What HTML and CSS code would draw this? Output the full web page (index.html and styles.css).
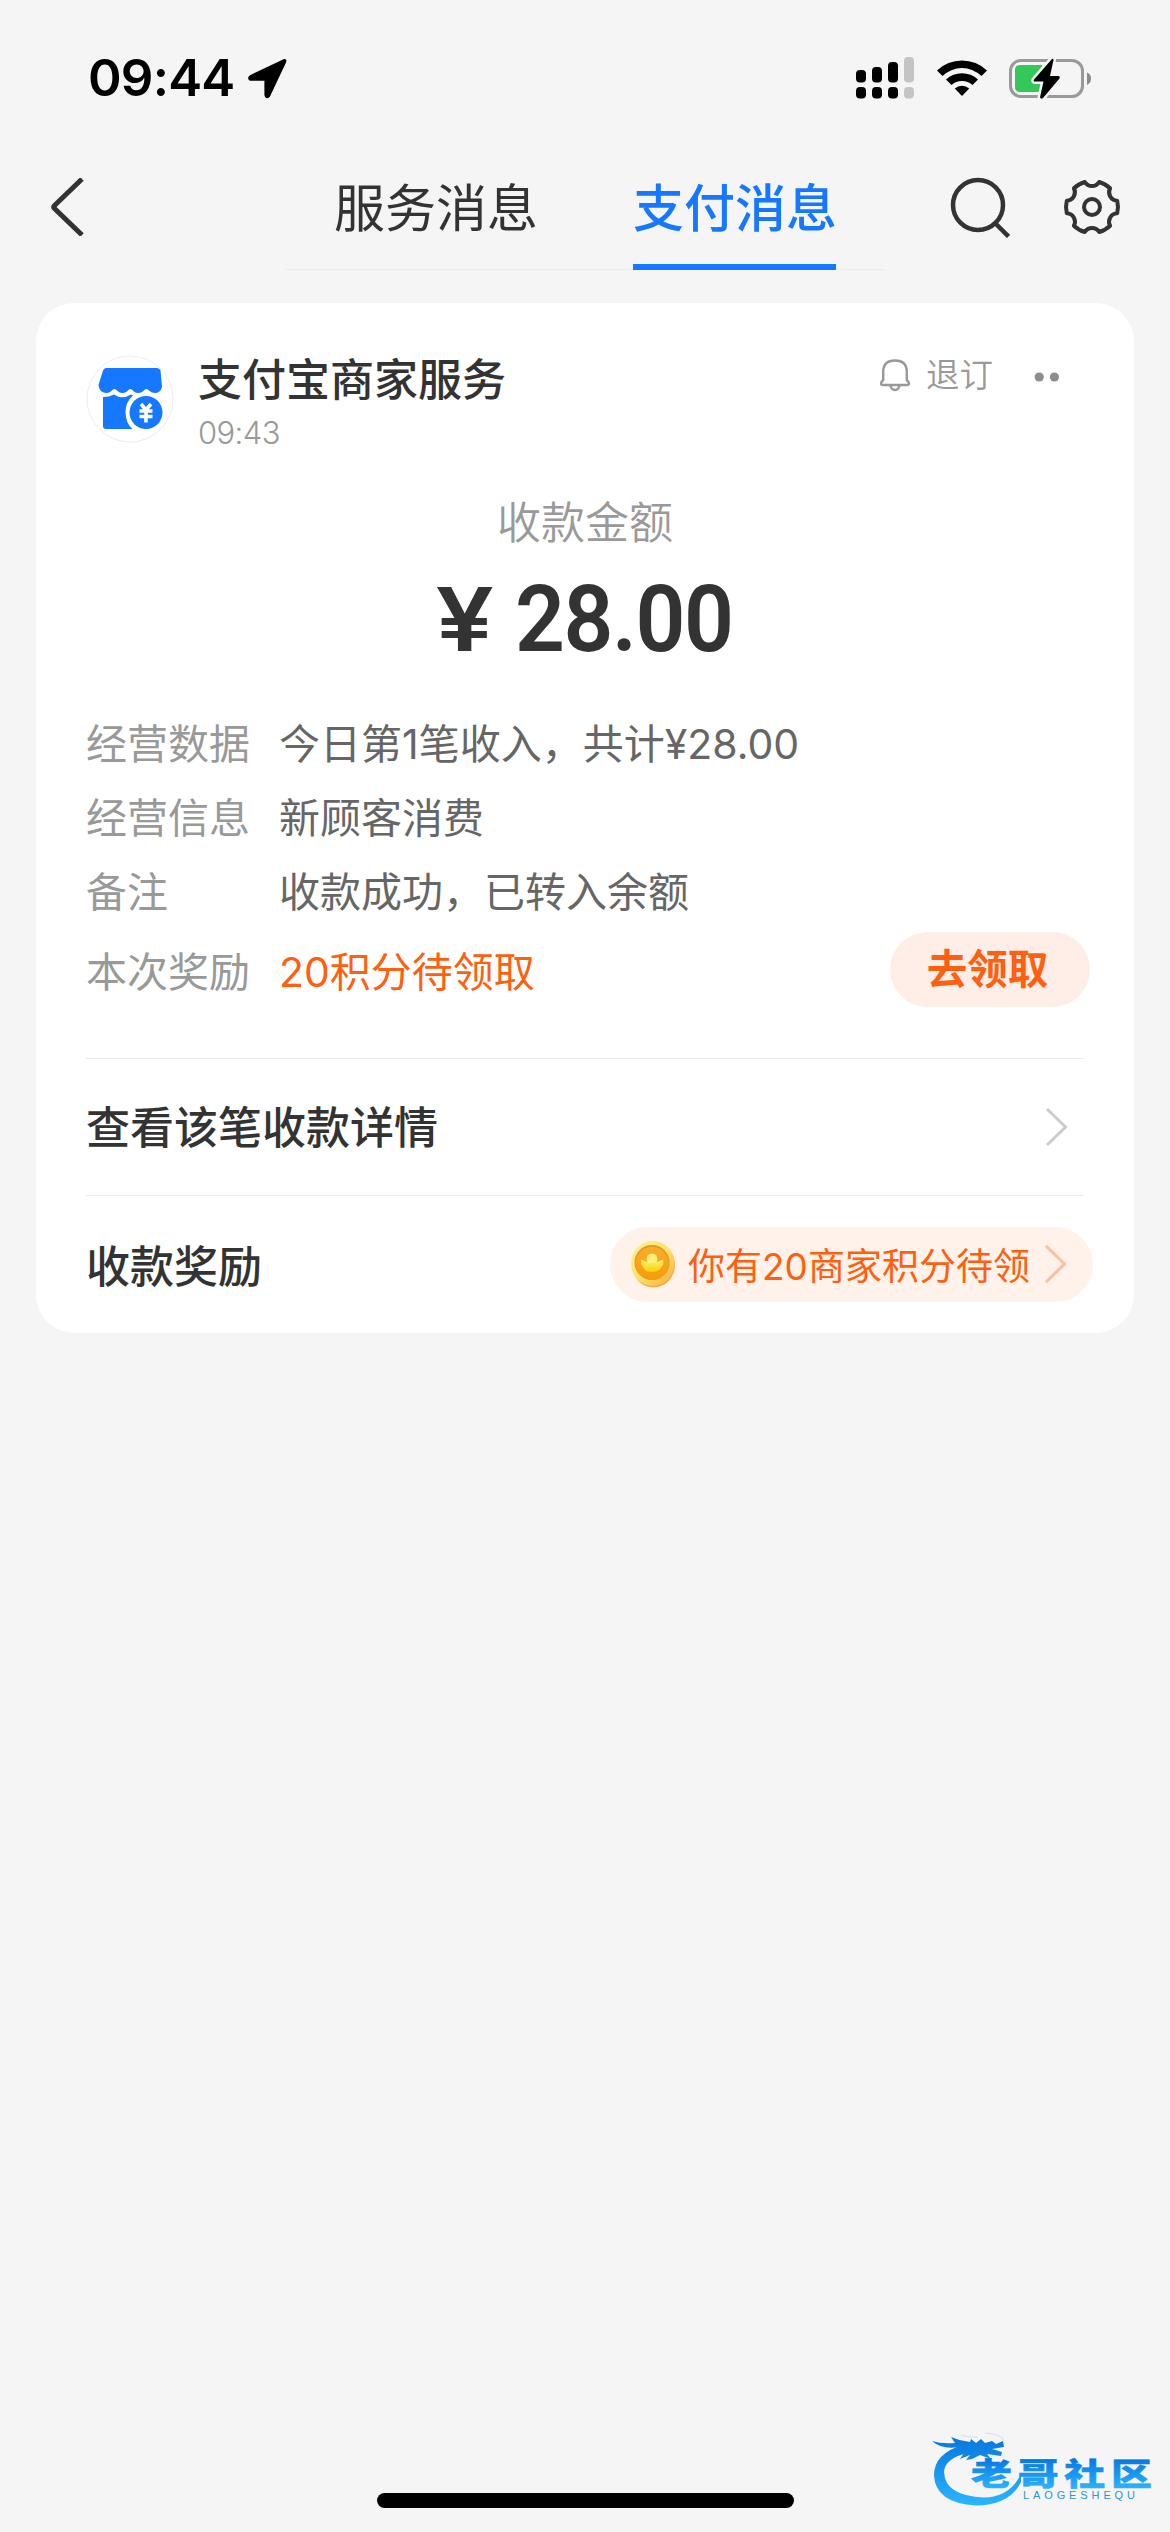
FILE: index.html
```html
<!DOCTYPE html>
<html lang="zh-CN">
<head>
<meta charset="utf-8">
<title>支付消息</title>
<link rel="stylesheet" href="styles.css">
</head>
<body>
<div class="screen">
  <header class="status">
    <div class="status-left">
      <span class="clock">09:44</span>
      <svg class="locate" width="41" height="41" viewBox="0 0 41 41"><path d="M36.500 1.200 3.500 17C0 18.700 .600 22.800 4.300 22.800H17.400V36.500C17.400 40.500 21.600 41.500 23.200 38L39 4.600C40.200 1.800 38.600 .200 36.500 1.200Z"/></svg>
    </div>
    <div class="status-right">
      <svg width="60" height="42" viewBox="0 0 60 42">
        <g><rect x="1" y="13" width="10" height="12.500" rx="4"/><rect x="17" y="10" width="10" height="15.500" rx="4"/><rect x="33" y="5" width="10" height="20.500" rx="4"/>
        <rect x="1" y="30" width="10" height="11.500" rx="4"/><rect x="17" y="30" width="10" height="11.500" rx="4"/><rect x="33" y="30" width="10" height="11.500" rx="4"/></g>
        <g fill="#c4c4c4"><rect x="49" y="0" width="10" height="25.500" rx="4"/><rect x="49" y="30" width="10" height="11.500" rx="4"/></g>
      </svg>
      <svg class="wifi" width="52" height="40" viewBox="0 0 52 40">
        <path d="M1 12.500A36 36 0 0 1 51 12.500L45.500 18A28 28 0 0 0 6.500 18Z"/>
        <path d="M10 21.500A23.500 23.500 0 0 1 42 21.500L36.500 27A15.500 15.500 0 0 0 15.500 27Z"/>
        <path d="M18.800 30.500A11 11 0 0 1 33.200 30.500L26 38Z"/>
      </svg>
      <svg class="battery" width="84" height="43" viewBox="0 0 84 43">
        <rect x="1.500" y="3.500" width="72" height="36" rx="10.500" fill="none" stroke="#999" stroke-width="3"/>
        <path d="M78 15.500Q82 17 82 21.500T78 28Z" fill="#8a8a8a"/>
        <path d="M11 8H33V35H11Q6 35 6 30V13Q6 8 11 8Z" fill="#34c759"/>
        <path d="M43 2 25 22.500Q24 24.500 26 24.500H34.500L31 40.500Q32 42.500 34 41L50.500 21.500Q51.500 19 49 19H41L44.500 3Q44.500 1 43 2Z" stroke="#f5f5f5" stroke-width="5" paint-order="stroke"/>
      </svg>
    </div>
  </header>

  <nav class="nav">
    <svg class="back" width="36" height="58" viewBox="0 0 36 58"><path d="M33 1 5.500 27.500Q4 29 5.500 30.500L33 57" fill="none" stroke="#333" stroke-width="5"/></svg>
    <div class="tabs">
      <span class="tab">服务消息</span>
      <span class="tab active">支付消息</span>
    </div>
    <div class="tools">
      <svg width="60" height="62" viewBox="0 0 60 62" fill="none" stroke="#333" stroke-width="4.500"><circle cx="28" cy="29" r="25"/><path d="M45.500 47.500 58.500 60.500"/></svg>
      <svg class="gear" width="60" height="60" viewBox="-30 -30 60 60" fill="none" stroke="#333" stroke-width="4" stroke-linejoin="round"><circle r="8"/><path d="M25.200 -6.300A26 26 0 0 1 25.200 6.300A8.400 8.400 0 0 0 18.100 18.700A26 26 0 0 1 7.200 25A8.400 8.400 0 0 0 -7.200 25A26 26 0 0 1 -18.100 18.700A8.400 8.400 0 0 0 -25.200 6.300A26 26 0 0 1 -25.200 -6.300A8.400 8.400 0 0 0 -18.100 -18.700A26 26 0 0 1 -7.200 -25A8.400 8.400 0 0 0 7.200 -25A26 26 0 0 1 18.100 -18.700A8.400 8.400 0 0 0 25.200 -6.300Z"/></svg>
    </div>
  </nav>

  <main class="card">
    <section class="merchant">
      <svg class="avatar" width="88" height="88" viewBox="0 0 88 88">
        <circle cx="44" cy="44" r="43" fill="#fff" stroke="#ececec"/>
        <path d="M20 13H71Q73.500 13 74.500 15.500L76 31.500Q75 38 69.500 38Q65 38 62 34.500Q60.500 33.500 59 34.500Q56 38 52 38Q48.500 38 46 34.500Q44.500 33.500 43 34.500Q40 38 36.500 38Q33 38 30 34.500Q28.500 33.500 27 34.500Q24 38 20 38Q13 37 12.500 30L17 15.500Q18 13 20 13Z" fill="#1677ff"/>
        <path d="M17 42Q23 42 28 39.500Q36 45 45 39.500L47 40.500Q39.500 47 39.500 57Q39.500 68 46.500 74H20Q17 74 17 71Z" fill="#1677ff"/>
        <circle cx="60" cy="57.500" r="16.500" fill="#1677ff"/>
        <path d="M55 49 60 55 65 49M60 55V67.500M53.500 56H66.500M53.500 61.500H66.500" fill="none" stroke="#fff" stroke-width="3.600"/>
      </svg>
      <div class="merchant-text">
        <h1 class="merchant-name">支付宝商家服务</h1>
        <time class="time">09:43</time>
      </div>
      <div class="unsubscribe">
        <svg width="32" height="34" viewBox="0 0 32 34" fill="none" stroke="#999" stroke-width="2.400"><path d="M4.200 22V14Q4.200 2.500 16 2.500T27.800 14V22Q30 24 30 25.500Q30 27 28 27H4Q2 27 2 25.500Q2 24 4.200 22Z" stroke-linejoin="round"/><path d="M11.500 27.500Q12.500 32 16 32T20.500 27.500"/></svg>
        <span>退订</span>
      </div>
      <svg class="more" width="26" height="12" viewBox="0 0 26 12" fill="#8c8c8c"><circle cx="5.200" cy="6" r="4.600"/><circle cx="20.400" cy="6" r="4.600"/></svg>
    </section>

    <p class="amount-label">收款金额</p>
    <p class="amount"><span class="yen">¥</span><span class="num">28.00</span></p>

    <dl class="details">
      <div class="row"><dt>经营数据</dt><dd>今日第1笔收入，共计¥28.00</dd></div>
      <div class="row"><dt>经营信息</dt><dd>新顾客消费</dd></div>
      <div class="row"><dt>备注</dt><dd>收款成功，已转入余额</dd></div>
      <div class="row reward"><dt>本次奖励</dt><dd>20积分待领取</dd><a class="claim">去领取</a></div>
    </dl>

    <a class="link">
      <span class="link-text">查看该笔收款详情</span>
      <svg class="chevron" width="24" height="38" viewBox="0 0 24 38"><path d="M2 1 20.500 19 2 37" fill="none" stroke="#ccc" stroke-width="3"/></svg>
    </a>
    <a class="link last">
      <span>收款奖励</span>
      <span class="points">
        <svg class="coin" width="46" height="48" viewBox="0 0 46 48">
          <defs>
            <linearGradient id="rim" x1="0" y1="0" x2="1" y2="1"><stop offset="0" stop-color="#fff08a"/><stop offset=".5" stop-color="#ffe36b"/><stop offset="1" stop-color="#f6a93c"/></linearGradient>
            <linearGradient id="face" x1="0" y1="0" x2="0" y2="1"><stop offset="0" stop-color="#f9ad2a"/><stop offset="1" stop-color="#f99a0c"/></linearGradient>
            <linearGradient id="ingot" x1="0" y1="0" x2="0" y2="1"><stop offset="0" stop-color="#fff37a"/><stop offset="1" stop-color="#f9d000"/></linearGradient>
          </defs>
          <ellipse cx="23.500" cy="25" rx="21.500" ry="22.500" fill="#f0ad45"/>
          <ellipse cx="22.800" cy="23.500" rx="21.800" ry="22.500" fill="url(#rim)"/>
          <circle cx="22" cy="22.500" r="17.500" fill="#d99a2b"/>
          <circle cx="22" cy="23.300" r="16.500" fill="url(#face)"/>
          <circle cx="22" cy="19" r="5.500" fill="#fff07a"/>
          <path d="M11.500 19.500Q22 26 33 19.500Q34 24 31.500 27Q29.500 32 22 32T13 27Q10.500 24 11.500 19.500Z" fill="url(#ingot)"/>
        </svg>
        <span class="points-text">你有20商家积分待领</span>
        <svg class="chevron" width="24" height="38" viewBox="0 0 24 38"><path d="M2 1 20.500 19 2 37" fill="none" stroke="#ffbf9f" stroke-width="3"/></svg>
      </span>
    </a>
  </main>

  <div class="home-indicator"></div>

  <svg class="watermark" width="230" height="80" viewBox="0 0 230 80">
    <defs>
      <linearGradient id="sea" gradientUnits="userSpaceOnUse" x1="0" y1="12" x2="0" y2="76"><stop offset="0" stop-color="#0a7be0"/><stop offset="1" stop-color="#2bb6ff"/></linearGradient>
      <linearGradient id="ink" gradientUnits="userSpaceOnUse" x1="0" y1="29" x2="0" y2="59"><stop offset="0" stop-color="#0878e0"/><stop offset="1" stop-color="#2ab4ff"/></linearGradient>
    </defs>
    <g fill="url(#sea)">
      <path d="M32 15Q4 24 4 45Q5 73 46 75.500Q80 75 91 52V44Q80 67 54 67.500Q15 66 14 42Q15 28 38 23Z"/>
      <path d="M2 11Q12 14 25 13L21 7Q30 11 40 12L41 9 46 13 51 9 55 13 62 11 66 14 73 11 74 17 62 19 72 22 71 26 57 24 61 29 50 25 42 29 36 30 40 25 30 29 34 23 26 21 29 17Q12 20 2 11Z"/>
    </g>
    <path d="M31 5Q38 8 48 7M55 3Q72 4 74 11" fill="none" stroke="#cfe0ee" stroke-width="1"/>
    <text class="mark-cn" transform="scale(1.320 1)" x="31 66.400 101.800 137.200" y="55.500" fill="url(#ink)" stroke="url(#ink)">老哥社区</text>
    <text class="mark-en" x="93" y="69" textLength="112">LAOGESHEQU</text>
  </svg>
</div>
</body>
</html>
```
FILE: styles.css
```css
* {
  box-sizing: border-box;
}

body {
  margin: 0;
  background: #f5f5f5;
  font-family: Inter, "Noto Sans CJK SC", sans-serif;
  color: #333;
}

h1, p, dl, dd {
  margin: 0;
}

svg {
  display: block;
  flex: none;
}

.screen {
  position: relative;
  width: 1170px;
  height: 2532px;
  display: flex;
  flex-direction: column;
  overflow: hidden;
}

.status {
  height: 144px;
  padding: 48px 79px 36px 88px;
  display: flex;
  justify-content: space-between;
  align-items: center;
}

.status-left,
.status-right {
  display: flex;
  align-items: center;
}

.clock {
  width: 159px;
  font-size: 51px;
  line-height: 60px;
  font-weight: 600;
  letter-spacing: -0.8px;
  color: #000;
}

.wifi {
  margin-left: 21px;
}

.battery {
  margin-left: 21px;
  margin-right: -2px;
}

.nav {
  height: 126px;
  padding-left: 49px;
  padding-right: 48px;
  display: flex;
  align-items: center;
}

.tabs {
  align-self: stretch;
  width: 600px;
  margin-left: 200px;
  margin-right: auto;
  padding: 0 49px;
  display: flex;
  justify-content: space-between;
  border-bottom: 1px solid #ededed;
}

.tab {
  width: 203px;
  height: 126px;
  padding-top: 31px;
  font-size: 51px;
  line-height: 68px;
  white-space: nowrap;
}

.tab.active {
  color: #1677ff;
  font-weight: 500;
  border-bottom: 6px solid #1677ff;
}

.tools {
  display: flex;
  align-items: center;
  gap: 52px;
}

.card {
  width: 1098px;
  height: 1030px;
  margin: 33px auto 0;
  padding: 0 50px;
  border-radius: 38px;
  background: #fff;
}

.merchant {
  height: 195px;
  padding-top: 53px;
  padding-right: 24px;
  display: flex;
  align-items: flex-start;
}

.avatar {
  margin-top: -1px;
}

.merchant-text {
  margin-left: 24px;
  margin-top: -3px;
  flex: 1;
}

.merchant-name {
  font-size: 44px;
  line-height: 54px;
  font-weight: 500;
}

.time {
  display: block;
  margin-top: 6px;
  font-size: 31px;
  line-height: 40px;
  font-weight: 300;
  letter-spacing: -0.6px;
  color: #999;
}

.unsubscribe {
  margin-top: -1px;
  margin-right: 41px;
  display: flex;
  align-items: center;
  gap: 15px;
  font-size: 33.500px;
  line-height: 40px;
  font-weight: 350;
  color: #999;
}

.more {
  margin-top: 15px;
}

.amount-label {
  text-align: center;
  font-size: 44px;
  line-height: 50px;
  font-weight: 350;
  color: #999;
}

.amount {
  height: 100px;
  margin-top: 21px;
  padding-left: 10px;
  display: flex;
  justify-content: center;
  align-items: baseline;
  gap: 18px;
  line-height: 100px;
}

.yen {
  font-size: 88px;
  font-weight: 600;
  transform: scaleX(1.180);
}

.num {
  font-family: Roboto, sans-serif;
  font-size: 93px;
  font-weight: 600;
  letter-spacing: -1.5px;
  transform: scaleX(0.940);
}

.details {
  margin-top: 35px;
}

.row {
  height: 74px;
  display: flex;
  align-items: center;
  font-size: 41px;
  font-weight: 400;
}

.row dt {
  width: 193px;
  color: #999;
}

.row dd {
  flex: 1;
  color: #666;
}

.row.reward {
  height: 86px;
  padding-right: -6px;
}

.row.reward dd {
  color: #ff6010;
}

.claim {
  width: 200px;
  height: 75px;
  margin-right: -6px;
  padding-right: 5px;
  border-radius: 38px;
  background: #ffeee8;
  text-align: center;
  font-size: 40.500px;
  font-weight: 700;
  line-height: 76px;
  color: #ff6010;
}

.link {
  height: 137px;
  padding-right: 15px;
  display: flex;
  justify-content: space-between;
  align-items: center;
  border-top: 1px solid #ebebeb;
  font-size: 44px;
  font-weight: 500;
}

.link-text {
  padding-bottom: 4px;
}

.details + .link {
  margin-top: 46px;
}

.points {
  width: 483px;
  height: 75px;
  margin-right: -24px;
  padding: 0 25px 0 20px;
  display: flex;
  align-items: center;
  border-radius: 38px;
  background: #fff2eb;
  font-size: 37px;
  font-weight: 400;
  color: #ff6010;
}

.points-text {
  flex: 1;
  margin-left: 12px;
  white-space: nowrap;
}

.home-indicator {
  width: 417px;
  height: 15px;
  margin: auto auto 24px;
  border-radius: 8px;
  background: #000;
}

.watermark {
  position: absolute;
  right: 10px;
  bottom: 22px;
}

.mark-cn {
  font-family: "Noto Sans CJK SC", sans-serif;
  font-size: 31px;
  font-weight: 900;
  stroke-width: 0.5px;
}

.mark-en {
  font-family: "Liberation Sans", sans-serif;
  font-size: 11px;
  fill: #2f93dc;
}
```
